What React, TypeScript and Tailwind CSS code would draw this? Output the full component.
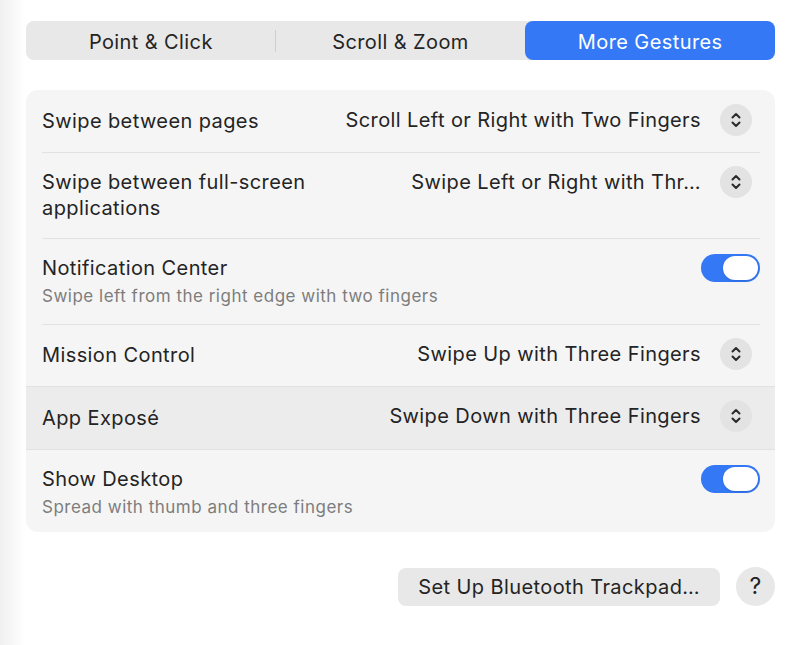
import React from "react";

type Row =
  | { kind: "popup"; label: string; sub?: string; value: string; h: string; hl?: boolean }
  | { kind: "toggle"; label: string; sub?: string; h: string };

const rows: Row[] = [
  { kind: "popup", label: "Swipe between pages", value: "Scroll Left or Right with Two Fingers", h: "h-[62px]" },
  { kind: "popup", label: "Swipe between full-screen applications", value: "Swipe Left or Right with Thr…", h: "h-[86px]" },
  { kind: "toggle", label: "Notification Center", sub: "Swipe left from the right edge with two fingers", h: "h-[86px]" },
  { kind: "popup", label: "Mission Control", value: "Swipe Up with Three Fingers", h: "h-[62px]" },
  { kind: "popup", label: "App Exposé", value: "Swipe Down with Three Fingers", h: "h-[63px]", hl: true },
  { kind: "toggle", label: "Show Desktop", sub: "Spread with thumb and three fingers", h: "h-[83px]" },
];

function Stepper() {
  return (
    <div className="w-[32px] h-[32px] rounded-full bg-[#e3e3e3] flex items-center justify-center">
      <svg width="12" height="18" viewBox="0 0 12 18" fill="none" stroke="#2a2a2a" strokeWidth="2" strokeLinecap="round" strokeLinejoin="round">
        <path d="M2.5 6.5 6 3l3.5 3.5" />
        <path d="M2.5 11.5 6 15l3.5-3.5" />
      </svg>
    </div>
  );
}

function Toggle() {
  return (
    <div className="w-[59px] h-[28px] rounded-full bg-[#3478f6] flex items-center justify-end p-[2px] mr-[-8px]">
      <div className="w-[35px] h-[24px] rounded-full bg-white shadow-sm" />
    </div>
  );
}

export default function App() {
  return (
    <div className="w-[800px] h-[645px] bg-white flex text-[#242424] tracking-[0.4px]" style={{ fontFamily: "Inter, 'Liberation Sans', sans-serif" }}>
      {/* left edge of window */}
      <div className="w-[26px] h-full bg-gradient-to-r from-[#f0f0f0] to-white" />

      <div className="flex-1 pr-[25px] pt-[21px]">
        {/* tabs */}
        <div className="grid grid-cols-3 h-[39px] rounded-[8px] bg-[#e8e8e8] text-[20px]">
          <div className="flex items-center justify-center relative pt-[2px]">
            Point &amp; Click
            <span className="absolute right-0 top-[9px] h-[22px] w-px bg-[#cfcfcf]" />
          </div>
          <div className="flex items-center justify-center pt-[2px]">Scroll &amp; Zoom</div>
          <div className="flex items-center justify-center rounded-[8px] bg-[#3478f6] text-white pt-[2px]">More Gestures</div>
        </div>

        {/* settings */}
        <div className="mt-[30px] rounded-[12px] bg-[#f5f5f5] overflow-hidden">
          {rows.map((r, i) => (
            <div
              key={i}
              className={`${r.h} ${r.hl ? "bg-[#ececec]" : ""} relative flex ${r.kind === "toggle" ? "items-start pt-[17px]" : "items-center"} pl-[16px] pr-[23px]`}
            >
              {i > 0 && <div className={`absolute top-0 h-px ${r.hl || (rows[i - 1] as any).hl ? "left-0 right-0" : "left-[16px] right-[15px]"} bg-[#e2e2e2]`} />}
              <div className="flex-1 min-w-0">
                <div className={`text-[20px] leading-[26px] ${r.label.length > 30 ? "w-[280px]" : ""}`}>{r.label}</div>
                {r.sub && <div className="text-[17px] leading-[22px] text-[#7d7d7d] mt-[4px] tracking-[0.5px]">{r.sub}</div>}
              </div>
              {r.kind === "popup" ? (
                <div className="flex items-center gap-[19px] self-start mt-[14px] h-[32px]">
                  <span className="text-[20px]">{r.value}</span>
                  <Stepper />
                </div>
              ) : (
                <div className="-mt-[1px]">
                  <Toggle />
                </div>
              )}
            </div>
          ))}
        </div>

        {/* bottom buttons */}
        <div className="mt-[35px] flex justify-end items-center gap-[16px]">
          <button className="h-[38px] px-[20px] rounded-[8px] bg-[#e8e8e8] text-[20px]">Set Up Bluetooth Trackpad…</button>
          <button className="w-[39px] h-[39px] rounded-full bg-[#e8e8e8] text-[23px] text-[#222]">?</button>
        </div>
      </div>
    </div>
  );
}
